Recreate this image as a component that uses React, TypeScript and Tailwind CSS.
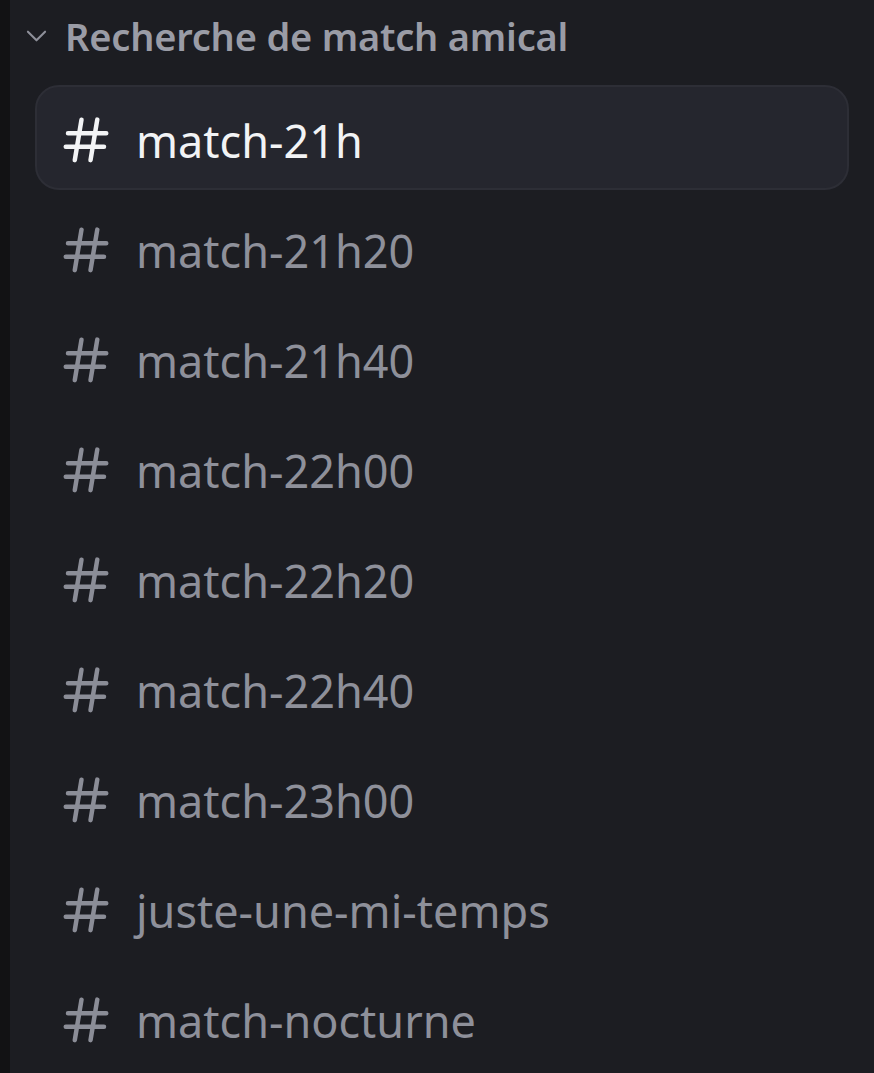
import React from 'react';

const channels = [
  'match-21h',
  'match-21h20',
  'match-21h40',
  'match-22h00',
  'match-22h20',
  'match-22h40',
  'match-23h00',
  'juste-une-mi-temps',
  'match-nocturne',
];

function HashIcon({ className }: { className?: string }) {
  return (
    <svg viewBox="0 0 24 24" fill="currentColor" className={className}>
      <path
        fillRule="evenodd"
        d="M10.99 3.16A1 1 0 1 0 9 2.84L8.15 8H4a1 1 0 0 0 0 2h3.82l-.67 4H3a1 1 0 1 0 0 2h3.82l-.8 4.84a1 1 0 0 0 1.97.32L8.85 16h4.97l-.8 4.84a1 1 0 0 0 1.97.32l.86-5.16H20a1 1 0 1 0 0-2h-3.82l.67-4H21a1 1 0 1 0 0-2h-3.82l.8-4.84a1 1 0 1 0-1.97-.32L15.15 8h-4.97l.8-4.84ZM14.15 14l.67-4H9.85l-.67 4h4.97Z"
      />
    </svg>
  );
}

export default function App() {
  return (
    <div
      className="flex w-[874px] h-[1073px] overflow-hidden bg-[#1c1d22]"
      style={{ fontFamily: '"Noto Sans", Inter, sans-serif' }}
    >
      <div className="w-[10px] shrink-0 bg-[#121214]" />
      <div className="flex-1 flex flex-col">
        <div className="flex items-center h-[72px] gap-[18px] pl-[16px]">
          <svg viewBox="0 0 24 14" className="w-[21px] h-[12px] text-[#8e909a]" fill="none">
            <path d="M2 2l10 10L22 2" stroke="currentColor" strokeWidth="2.4" strokeLinecap="round" strokeLinejoin="round" />
          </svg>
          <span className="text-[38px] font-semibold text-[#9a9ca6] tracking-[-0.2px] leading-none">
            Recherche de match amical
          </span>
        </div>
        <div className="flex flex-col gap-[5px] mt-[13px] px-[25px]">
          {channels.map((name, i) => {
            const active = i === 0;
            return (
              <div
                key={name}
                className={`flex items-center h-[105px] rounded-[24px] pl-[22px] gap-[23px] border-2 ${
                  active ? 'bg-[#25262e] border-[#2d2e36]' : 'border-transparent'
                }`}
              >
                <HashIcon className={`w-[54px] h-[54px] mt-[4px] ${active ? 'text-[#f2f3f5]' : 'text-[#8b8d97]'}`} />
                <span
                  className={`text-[45px] leading-none pt-[6px] ${active ? 'text-[#f2f3f5]' : 'text-[#8e909a]'}`}
                >
                  {name}
                </span>
              </div>
            );
          })}
        </div>
      </div>
    </div>
  );
}
